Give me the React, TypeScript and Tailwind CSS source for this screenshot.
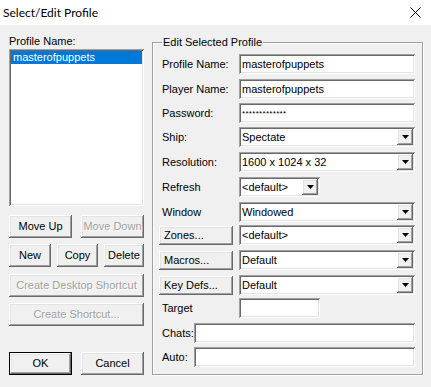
import React from "react";

const raised =
  "bg-[#f0f0f0] shadow-[inset_-1px_-1px_#696969,inset_1px_1px_#ffffff,inset_-2px_-2px_#a0a0a0,inset_2px_2px_#e3e3e3]";
const sunken =
  "bg-white shadow-[inset_1px_1px_#a0a0a0,inset_-1px_-1px_#ffffff,inset_2px_2px_#696969,inset_-2px_-2px_#e3e3e3]";
const greyed = "text-[#a0a0a0] [text-shadow:1px_1px_0_#ffffff]";

function Btn({
  label,
  className = "",
  disabled = false,
  isDefault = false,
  left = false,
}: {
  label: string;
  className?: string;
  disabled?: boolean;
  isDefault?: boolean;
  left?: boolean;
}) {
  const frame = isDefault
    ? "bg-[#f0f0f0] shadow-[inset_0_0_0_1px_#000000,inset_-2px_-2px_#696969,inset_2px_2px_#ffffff,inset_-3px_-3px_#a0a0a0,inset_3px_3px_#e3e3e3]"
    : raised;
  return (
    <div
      className={`${frame} flex items-center ${left ? "justify-start pl-[5px]" : "justify-center"} ${
        disabled ? greyed : "text-black"
      } ${className}`}
    >
      {label}
    </div>
  );
}

function Arrow() {
  return (
    <svg width="7" height="4" viewBox="0 0 7 4">
      <polygon points="0,0 7,0 3.5,4" fill="#000" />
    </svg>
  );
}

function Field({ value = "", className = "", small = false }: { value?: string; className?: string; small?: boolean }) {
  return (
    <div className={`${sunken} h-[20px] flex items-center pl-[3px] ${className}`}>
      <span className={small ? "text-[8px] tracking-[0.3px]" : ""}>{value}</span>
    </div>
  );
}

function Combo({ value, className = "w-[176px]" }: { value: string; className?: string }) {
  return (
    <div className={`${sunken} h-[20px] flex items-center p-[2px] ${className}`}>
      <span className="flex-1 pl-[1px]">{value}</span>
      <div className={`${raised} w-[16px] h-[16px] flex items-center justify-center`}>
        <Arrow />
      </div>
    </div>
  );
}

function Label({ text, w = "w-[77px]" }: { text: string; w?: string }) {
  return <div className={`${w} shrink-0`}>{text}</div>;
}

export default function App() {
  return (
    <div className="w-[431px] h-[387px] bg-[#f0f0f0] overflow-hidden text-[11px] leading-[13px] text-black font-['Liberation_Sans',Arial,sans-serif]">
      <div className="h-[25px] bg-white flex items-center justify-between pl-[3px] pr-[10px]">
        <span className="text-[12px] font-['Lato','Liberation_Sans',sans-serif]">Select/Edit Profile</span>
        <svg width="11" height="11" viewBox="0 0 11 11">
          <path d="M0.5 0.5 L10.5 10.5 M10.5 0.5 L0.5 10.5" stroke="#000" strokeWidth="1" />
        </svg>
      </div>

      <div className="flex pl-[9px]">
        <div className="w-[135px] flex flex-col pt-[10px]">
          <div className="h-[14px]">Profile Name:</div>
          <div className={`${sunken} h-[157px] p-[2px]`}>
            <div className="h-[13px] bg-[#0078d7] text-white pl-[2px]">masterofpuppets</div>
          </div>
          <div className="flex gap-[9px] mt-[9px]">
            <Btn label="Move Up" className="w-[63px] h-[23px]" />
            <Btn label="Move Down" disabled className="w-[63px] h-[23px]" />
          </div>
          <div className="flex gap-[6px] mt-[6px]">
            <Btn label="New" className="w-[42px] h-[23px]" />
            <Btn label="Copy" className="w-[41px] h-[23px]" />
            <Btn label="Delete" className="w-[40px] h-[23px]" />
          </div>
          <Btn label="Create Desktop Shortcut" disabled className="mt-[7px] h-[23px]" />
          <Btn label="Create Shortcut..." disabled className="mt-[6px] h-[23px]" />
          <div className="flex gap-[9px] mt-[26px]">
            <Btn label="OK" isDefault className="w-[63px] h-[23px]" />
            <Btn label="Cancel" className="w-[63px] h-[23px]" />
          </div>
        </div>

        <div className="relative ml-[8px] mt-[17px] w-[271px] h-[333px] border border-[#a0a0a0] shadow-[inset_1px_1px_0_#ffffff,1px_1px_0_#ffffff] pl-[9px] pr-[7px] pt-[11px] flex flex-col">
          <span className="absolute left-[9px] -top-[7px] bg-[#f0f0f0] px-[1px]">Edit Selected Profile</span>

          <div className="flex items-center h-[20px]">
            <Label text="Profile Name:" />
            <Field value="masterofpuppets" className="w-[176px]" />
          </div>
          <div className="flex items-center h-[20px] mt-[5px]">
            <Label text="Player Name:" />
            <Field value="masterofpuppets" className="w-[176px]" />
          </div>
          <div className="flex items-center h-[20px] mt-[4px]">
            <Label text="Password:" />
            <Field value="*************" small className="w-[176px]" />
          </div>
          <div className="flex items-center h-[20px] mt-[4px]">
            <Label text="Ship:" />
            <Combo value="Spectate" />
          </div>
          <div className="flex items-center h-[20px] mt-[5px]">
            <Label text="Resolution:" />
            <Combo value="1600 x 1024 x 32" />
          </div>
          <div className="flex items-center h-[20px] mt-[5px]">
            <Label text="Refresh" />
            <Combo value="<default>" className="w-[81px]" />
          </div>
          <div className="flex items-center h-[20px] mt-[5px]">
            <Label text="Window" />
            <Combo value="Windowed" />
          </div>
          <div className="flex items-center h-[20px] mt-[3px]">
            <Btn label="Zones..." left className="ml-[-3px] mr-[6px] w-[74px] h-[19px] shrink-0" />
            <Combo value="<default>" />
          </div>
          <div className="flex items-center h-[20px] mt-[5px]">
            <Btn label="Macros..." left className="ml-[-3px] mr-[6px] w-[74px] h-[19px] shrink-0" />
            <Combo value="Default" />
          </div>
          <div className="flex items-center h-[20px] mt-[5px]">
            <Btn label="Key Defs..." left className="ml-[-3px] mr-[6px] w-[74px] h-[19px] shrink-0" />
            <Combo value="Default" />
          </div>
          <div className="flex items-center h-[20px] mt-[3px]">
            <Label text="Target" />
            <Field className="w-[81px]" />
          </div>
          <div className="flex items-center h-[20px] mt-[5px]">
            <Label text="Chats:" w="w-[32px]" />
            <Field className="w-[221px]" />
          </div>
          <div className="flex items-center h-[20px] mt-[4px]">
            <Label text="Auto:" w="w-[32px]" />
            <Field className="w-[221px]" />
          </div>
        </div>
      </div>
    </div>
  );
}
